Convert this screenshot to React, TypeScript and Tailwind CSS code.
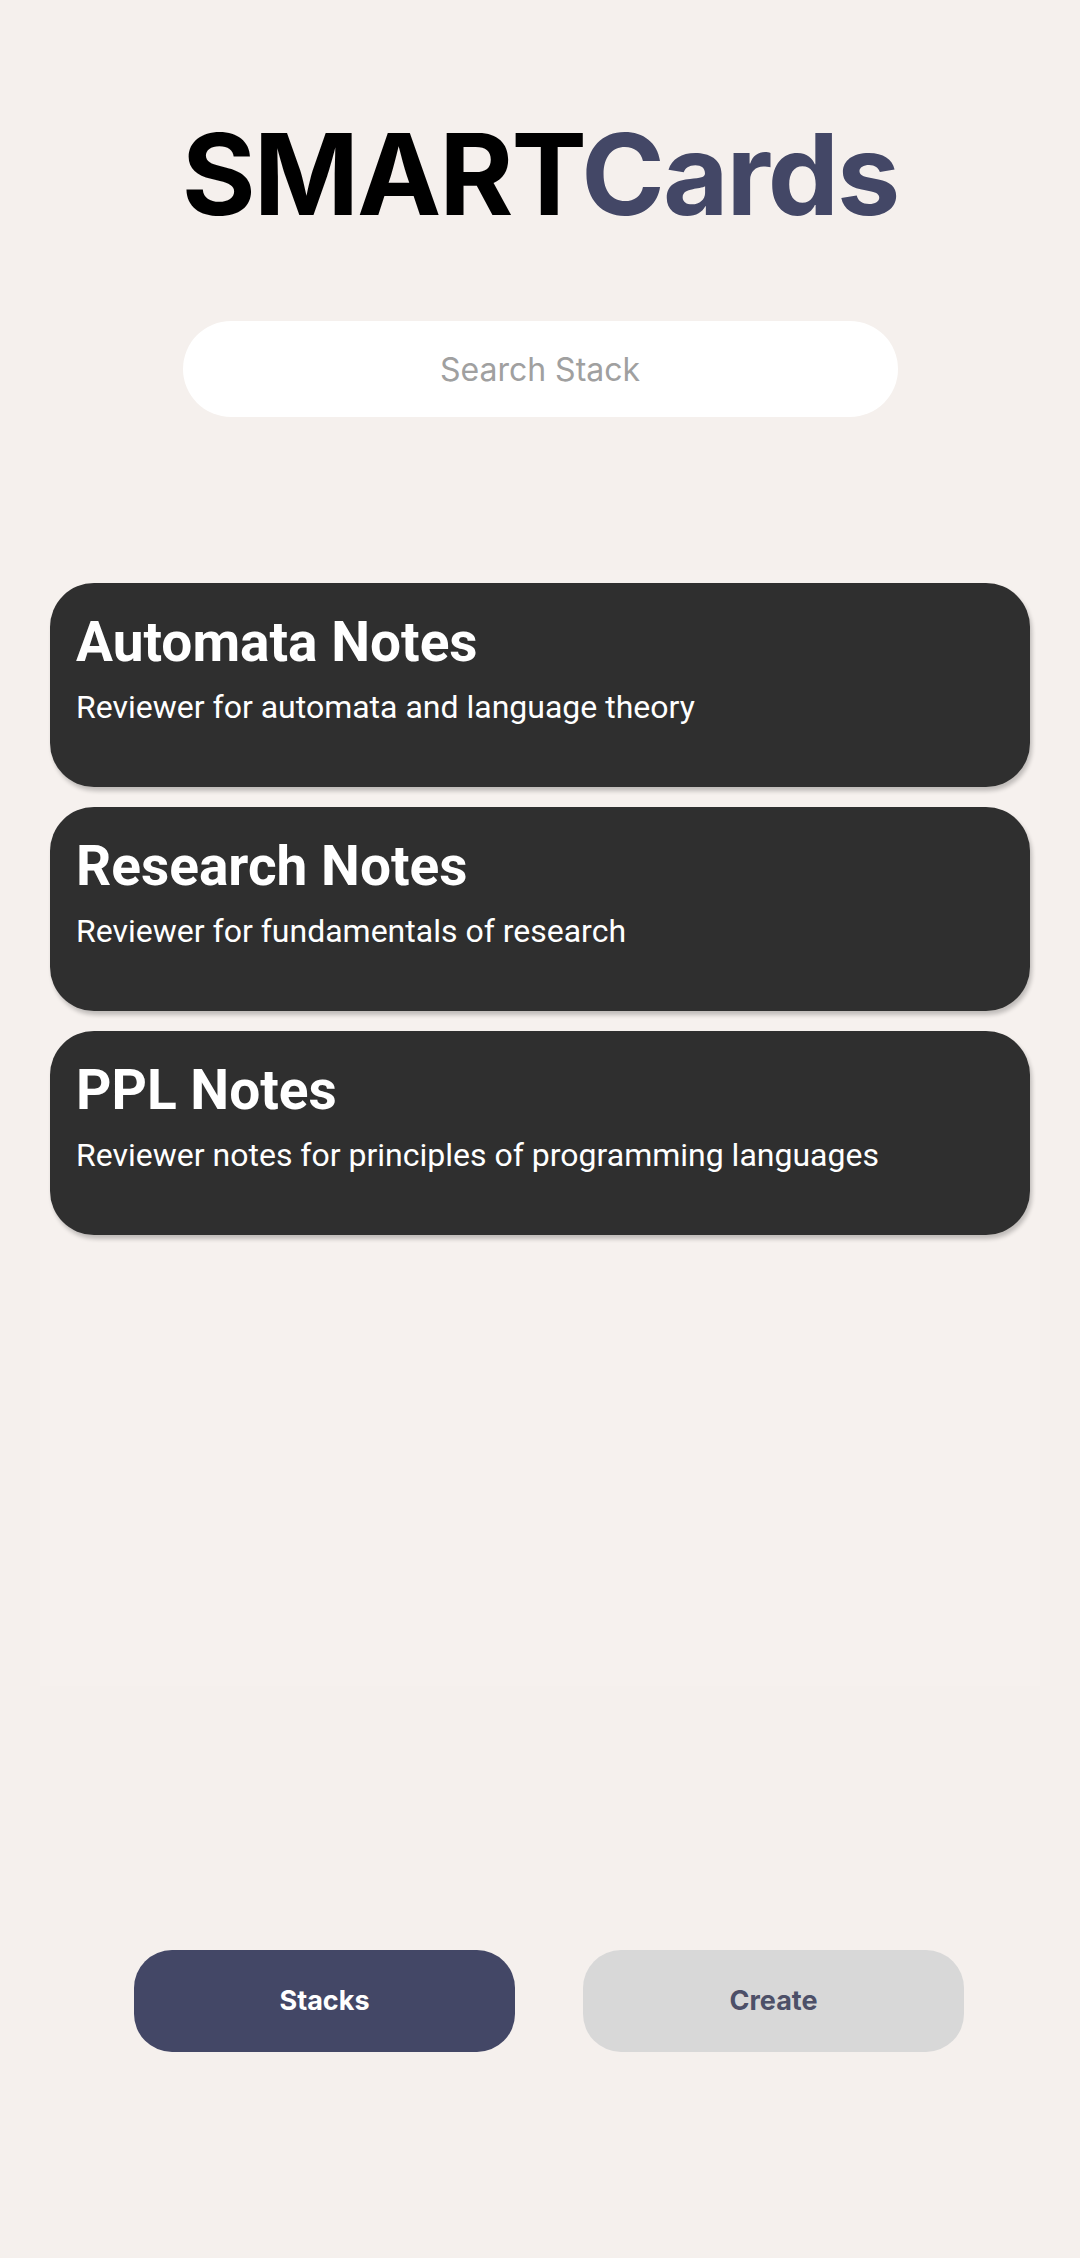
const stacks = [
  { title: "Automata Notes", desc: "Reviewer for automata and language theory" },
  { title: "Research Notes", desc: "Reviewer for fundamentals of research" },
  { title: "PPL Notes", desc: "Reviewer notes for principles of programming languages" },
];

function StackCard({ title, desc }: { title: string; desc: string }) {
  return (
    <div className="h-[204px] rounded-[44px] bg-[#2f2f2f] px-[26px] pt-[32px] shadow-[2px_4px_4px_rgba(0,0,0,0.22)] font-['Roboto',sans-serif]">
      <h2 className="text-[55px] font-bold leading-none text-white">{title}</h2>
      <p className="mt-[21px] text-[32px] leading-none text-white">{desc}</p>
    </div>
  );
}

export default function App() {
  return (
    <div className="min-h-[2258px] w-full bg-[#f5f0ed] font-['Inter',sans-serif]">
      <div className="flex flex-col items-center pt-[118px]">
        {/* Logo */}
        <h1 className="text-[113px] font-bold leading-none tracking-[-2px]">
          <span className="text-black">SMART</span>
          <span className="text-[#434766]">Cards</span>
        </h1>

        {/* Search */}
        <input
          type="text"
          placeholder="Search Stack"
          className="mt-[90px] h-[96px] w-[715px] rounded-full bg-white text-center text-[32px] text-[#555] outline-none placeholder:text-[#a0a0a0]"
        />
      </div>

      {/* Stack list */}
      <div className="mx-[40px] mt-[153px] flex h-[1116px] flex-col gap-[20px] bg-[#f6f1ee] px-[10px] pt-[13px]">
        {stacks.map((s) => (
          <StackCard key={s.title} title={s.title} desc={s.desc} />
        ))}
      </div>

      {/* Bottom nav */}
      <div className="mt-[264px] flex justify-center gap-[68px] pl-[18px]">
        <button className="h-[102px] w-[381px] rounded-[38px] bg-[#434766] text-[27px] font-bold text-white">
          Stacks
        </button>
        <button className="h-[102px] w-[381px] rounded-[38px] bg-[#d8d8d8] text-[27px] font-bold text-[#4d5068]">
          Create
        </button>
      </div>
    </div>
  );
}
